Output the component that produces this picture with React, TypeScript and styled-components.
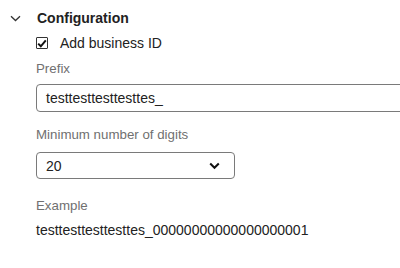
import React from "react";
import styled, { createGlobalStyle } from "styled-components";

const GlobalStyle = createGlobalStyle`
  html, body {
    margin: 0;
    padding: 0;
    background: #ffffff;
    overflow: hidden;
  }
  body {
    font-family: "Liberation Sans", Arial, sans-serif;
    color: #1f1f1f;
  }
`;

const Panel = styled.section`
  padding: 9px 0 0 8px;
`;

const Header = styled.div`
  display: flex;
  align-items: center;
  gap: 14px;
  height: 18px;
`;

const Toggle = styled.span`
  display: flex;
  width: 15px;
  justify-content: center;
`;

const Title = styled.h2`
  margin: 0;
  font-size: 14px;
  font-weight: 700;
  color: #222222;
`;

const Body = styled.div`
  padding-left: 28px;
  display: flex;
  flex-direction: column;
`;

const CheckRow = styled.label`
  display: flex;
  align-items: center;
  gap: 12px;
  margin-top: 9px;
  height: 14px;
  font-size: 14px;
  color: #222222;
`;

const Box = styled.span`
  width: 12px;
  height: 12px;
  box-sizing: border-box;
  border: 1px solid #333333;
  border-radius: 1px;
  display: flex;
  align-items: center;
  justify-content: center;
`;

const Label = styled.div<{ $top: number }>`
  margin-top: ${(p) => p.$top}px;
  font-size: 13.3px;
  line-height: 16px;
  color: #707070;
`;

const Field = styled.div<{ $top: number; $width: number; $height: number }>`
  margin-top: ${(p) => p.$top}px;
  width: ${(p) => p.$width}px;
  height: ${(p) => p.$height}px;
  box-sizing: border-box;
  border: 1px solid #7a7a7a;
  border-radius: 4px;
  padding: 0 14px 0 9px;
  display: flex;
  align-items: center;
  justify-content: space-between;
  font-size: 14px;
  color: #222222;
`;

const Value = styled.div`
  margin-top: 8px;
  font-size: 14px;
  line-height: 16px;
  color: #222222;
`;

export default function App() {
  return (
    <>
      <GlobalStyle />
      <Panel>
        <Header>
          <Toggle>
            <svg width="11" height="7" viewBox="0 0 11 7" fill="none">
              <path d="M1 1.2 L5.5 5.5 L10 1.2" stroke="#333" strokeWidth="1.3" />
            </svg>
          </Toggle>
          <Title>Configuration</Title>
        </Header>
        <Body>
          <CheckRow>
            <Box>
              <svg width="10" height="9" viewBox="0 0 10 9">
                <path d="M1.2 4.6 L3.8 7.3 L8.8 1.3" stroke="#111" strokeWidth="2" fill="none" />
              </svg>
            </Box>
            Add business ID
          </CheckRow>
          <Label $top={11}>Prefix</Label>
          <Field $top={7} $width={400} $height={28}>testtesttesttesttes_</Field>
          <Label $top={15}>Minimum number of digits</Label>
          <Field $top={9} $width={199} $height={27}>
            20
            <svg width="11" height="8" viewBox="0 0 11 8" fill="none">
              <path d="M1.2 1.5 L5.5 5.8 L9.8 1.5" stroke="#111" strokeWidth="2" />
            </svg>
          </Field>
          <Label $top={19}>Example</Label>
          <Value>testtesttesttesttes_00000000000000000001</Value>
        </Body>
      </Panel>
    </>
  );
}
